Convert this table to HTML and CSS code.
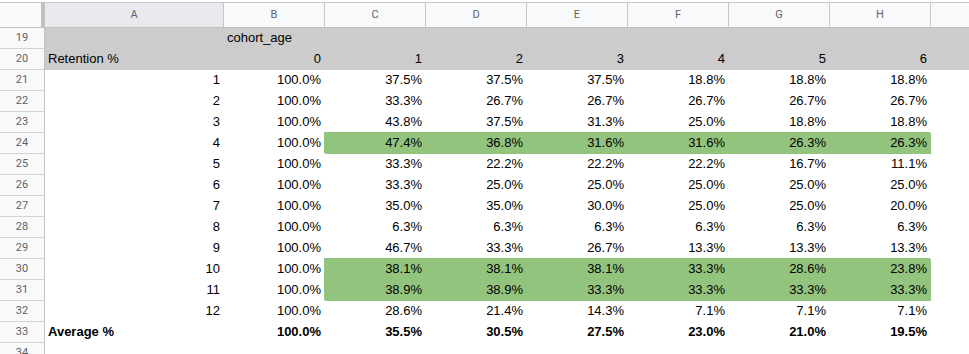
FILE: index.html
```html
<!DOCTYPE html>
<html>
<head>
<meta charset="utf-8">
<link rel="stylesheet" href="styles.css">
</head>
<body>
<div class="sheet">
  <div class="heads">
    <div class="corner"></div>
    <div class="ch sel">A</div>
    <div class="ch">B</div>
    <div class="ch">C</div>
    <div class="ch">D</div>
    <div class="ch">E</div>
    <div class="ch">F</div>
    <div class="ch">G</div>
    <div class="ch">H</div>
    <div class="ch last"></div>
  </div>
  <div class="grid">
    <div class="rh">19</div><div class="c k"></div><div class="c k">cohort_age</div><div class="c k"></div><div class="c k"></div><div class="c k"></div><div class="c k"></div><div class="c k"></div><div class="c k"></div><div class="c k"></div>
    <div class="rh">20</div><div class="c k">Retention %</div><div class="c k r">0</div><div class="c k r">1</div><div class="c k r">2</div><div class="c k r">3</div><div class="c k r">4</div><div class="c k r">5</div><div class="c k r">6</div><div class="c k"></div>
    <div class="rh">21</div><div class="c r">1</div><div class="c r">100.0%</div><div class="c r">37.5%</div><div class="c r">37.5%</div><div class="c r">37.5%</div><div class="c r">18.8%</div><div class="c r">18.8%</div><div class="c r">18.8%</div><div class="c"></div>
    <div class="rh">22</div><div class="c r">2</div><div class="c r">100.0%</div><div class="c r">33.3%</div><div class="c r">26.7%</div><div class="c r">26.7%</div><div class="c r">26.7%</div><div class="c r">26.7%</div><div class="c r">26.7%</div><div class="c"></div>
    <div class="rh">23</div><div class="c r">3</div><div class="c r">100.0%</div><div class="c r">43.8%</div><div class="c r">37.5%</div><div class="c r">31.3%</div><div class="c r">25.0%</div><div class="c r">18.8%</div><div class="c r">18.8%</div><div class="c"></div>
    <div class="rh">24</div><div class="c r">4</div><div class="c r">100.0%</div><div class="c r g">47.4%</div><div class="c r g">36.8%</div><div class="c r g">31.6%</div><div class="c r g">31.6%</div><div class="c r g">26.3%</div><div class="c r g">26.3%</div><div class="c"></div>
    <div class="rh">25</div><div class="c r">5</div><div class="c r">100.0%</div><div class="c r">33.3%</div><div class="c r">22.2%</div><div class="c r">22.2%</div><div class="c r">22.2%</div><div class="c r">16.7%</div><div class="c r">11.1%</div><div class="c"></div>
    <div class="rh">26</div><div class="c r">6</div><div class="c r">100.0%</div><div class="c r">33.3%</div><div class="c r">25.0%</div><div class="c r">25.0%</div><div class="c r">25.0%</div><div class="c r">25.0%</div><div class="c r">25.0%</div><div class="c"></div>
    <div class="rh">27</div><div class="c r">7</div><div class="c r">100.0%</div><div class="c r">35.0%</div><div class="c r">35.0%</div><div class="c r">30.0%</div><div class="c r">25.0%</div><div class="c r">25.0%</div><div class="c r">20.0%</div><div class="c"></div>
    <div class="rh">28</div><div class="c r">8</div><div class="c r">100.0%</div><div class="c r">6.3%</div><div class="c r">6.3%</div><div class="c r">6.3%</div><div class="c r">6.3%</div><div class="c r">6.3%</div><div class="c r">6.3%</div><div class="c"></div>
    <div class="rh">29</div><div class="c r">9</div><div class="c r">100.0%</div><div class="c r">46.7%</div><div class="c r">33.3%</div><div class="c r">26.7%</div><div class="c r">13.3%</div><div class="c r">13.3%</div><div class="c r">13.3%</div><div class="c"></div>
    <div class="rh">30</div><div class="c r">10</div><div class="c r">100.0%</div><div class="c r g">38.1%</div><div class="c r g">38.1%</div><div class="c r g">38.1%</div><div class="c r g">33.3%</div><div class="c r g">28.6%</div><div class="c r g">23.8%</div><div class="c"></div>
    <div class="rh">31</div><div class="c r">11</div><div class="c r">100.0%</div><div class="c r g">38.9%</div><div class="c r g">38.9%</div><div class="c r g">33.3%</div><div class="c r g">33.3%</div><div class="c r g">33.3%</div><div class="c r g">33.3%</div><div class="c"></div>
    <div class="rh">32</div><div class="c r">12</div><div class="c r">100.0%</div><div class="c r">28.6%</div><div class="c r">21.4%</div><div class="c r">14.3%</div><div class="c r">7.1%</div><div class="c r">7.1%</div><div class="c r">7.1%</div><div class="c"></div>
    <div class="rh">33</div><div class="c b">Average %</div><div class="c r b">100.0%</div><div class="c r b">35.5%</div><div class="c r b">30.5%</div><div class="c r b">27.5%</div><div class="c r b">23.0%</div><div class="c r b">21.0%</div><div class="c r b">19.5%</div><div class="c"></div>
    <div class="rh">34</div><div class="c"></div><div class="c"></div><div class="c"></div><div class="c"></div><div class="c"></div><div class="c"></div><div class="c"></div><div class="c"></div><div class="c"></div>
  </div>
</div>
</body>
</html>
```

FILE: styles.css
```css
html, body {
  margin: 0;
  padding: 0;
  background: #ffffff;
  overflow: hidden;
}

.sheet {
  padding-top: 2px;
  font-family: "Liberation Sans", Arial, sans-serif;
  font-size: 13px;
  color: #000000;
}

.heads {
  display: grid;
  grid-template-columns: 45px 179px repeat(7, 101px) 1fr;
  border-top: 1px solid #c7c7c7;
  border-bottom: 1px solid #c0c0c0;
  height: 24px;
}

.corner {
  background: #f8f9fa;
  border-right: 4px solid #c0c0c0;
}

.ch {
  background: #f8f9fa;
  border-right: 1px solid #c7c7c7;
  color: #5f6368;
  font-family: Roboto, "Liberation Sans", sans-serif;
  font-size: 11px;
  line-height: 24px;
  text-align: center;
}

.ch.sel {
  background: #e8eaed;
}

.ch.last {
  border-right: none;
}

.grid {
  display: grid;
  grid-template-columns: 45px 179px repeat(7, 101px) 1fr;
  grid-auto-rows: 21px;
}

.rh {
  background: #f8f9fa;
  border-right: 1px solid #c0c0c0;
  border-bottom: 1px solid #d3d3d3;
  color: #5f6368;
  font-family: Roboto, "Liberation Sans", sans-serif;
  font-size: 11px;
  line-height: 20px;
  text-align: center;
}

.c {
  padding: 0 4px 0 3px;
  line-height: 20px;
  white-space: nowrap;
  overflow: visible;
}

.r {
  text-align: right;
}

.b {
  font-weight: bold;
}

.k {
  background: #cccccc;
}

.g {
  background: #93c47d;
  box-shadow: -1px -1px 0 #93c47d;
}
```
